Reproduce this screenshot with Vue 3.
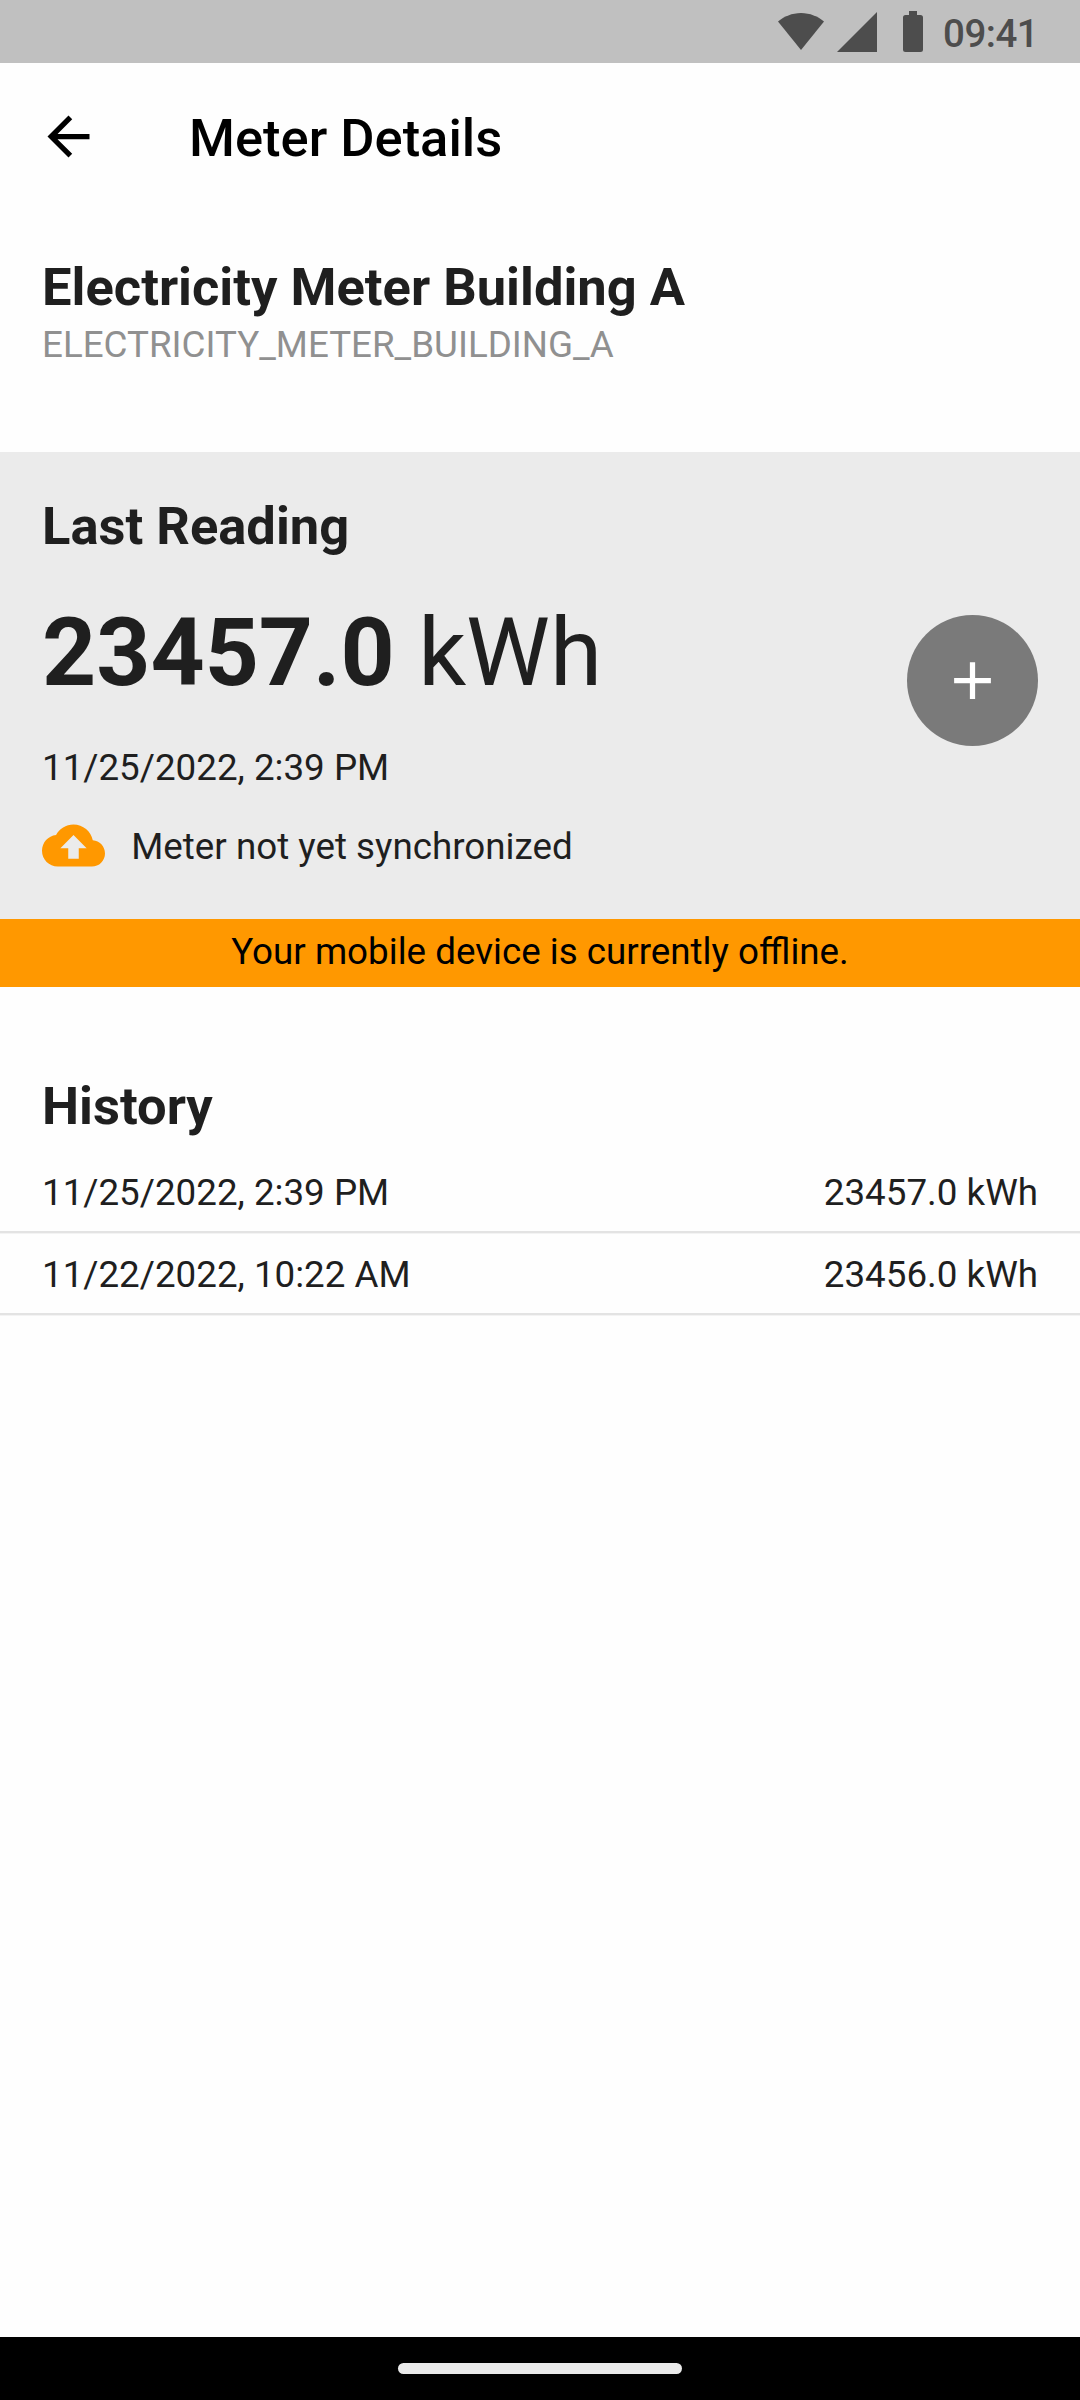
<script setup>
const meter = {
  name: 'Electricity Meter Building A',
  id: 'ELECTRICITY_METER_BUILDING_A',
  value: '23457.0',
  unit: 'kWh',
  date: '11/25/2022, 2:39 PM',
}
const history = [
  { date: '11/25/2022, 2:39 PM', value: '23457.0 kWh' },
  { date: '11/22/2022, 10:22 AM', value: '23456.0 kWh' },
]
</script>

<template>
  <div class="screen">
    <div class="status">
      <svg class="wifi" viewBox="0 0 46 37"><path d="M0 8.500C6 3.500 14 0 23 0s17 3.500 23 8.500L23 37z" /></svg>
      <svg class="signal" viewBox="0 0 40 40"><path d="M0 40L40 0v40z" /></svg>
      <svg class="battery" viewBox="0 0 20 41"><path d="M6 0h8v4h3.500A2.500 2.500 0 0 1 20 6.500v32a2.500 2.500 0 0 1-2.500 2.500h-15A2.500 2.500 0 0 1 0 38.500v-32A2.500 2.500 0 0 1 2.500 4H6z" /></svg>
      <span class="time">09:41</span>
    </div>

    <header class="appbar">
      <svg class="back" viewBox="0 0 24 24"><path d="M20 11H7.830l5.590-5.590L12 4l-8 8 8 8 1.410-1.410L7.830 13H20v-2z" /></svg>
      <h1 class="title">Meter Details</h1>
    </header>

    <section class="identity">
      <h2 class="heading name">{{ meter.name }}</h2>
      <p class="body id">{{ meter.id }}</p>
    </section>

    <section class="reading">
      <div class="info">
        <h2 class="heading last">Last Reading</h2>
        <p class="value"><b class="num">{{ meter.value }}</b> {{ meter.unit }}</p>
        <p class="body date">{{ meter.date }}</p>
        <div class="sync">
          <svg class="cloud" viewBox="0 0 24 24"><path d="M19.350 10.040C18.670 6.590 15.640 4 12 4 9.110 4 6.600 5.640 5.350 8.040 2.340 8.360 0 10.910 0 14c0 3.310 2.690 6 6 6h13c2.760 0 5-2.240 5-5 0-2.640-2.050-4.780-4.650-4.960zM14 13v4h-4v-4H7l5-5 5 5h-3z" /></svg>
          <span class="body sync-text">Meter not yet synchronized</span>
        </div>
      </div>
      <button class="add" aria-label="Add reading">
        <svg class="plus" viewBox="0 0 24 24"><path d="M19 13h-6v6h-2v-6H5v-2h6V5h2v6h6v2z" /></svg>
      </button>
    </section>

    <div class="banner">Your mobile device is currently offline.</div>

    <section class="history">
      <h2 class="heading history-title">History</h2>
      <div v-for="row in history" :key="row.date" class="row">
        <span class="body">{{ row.date }}</span>
        <span class="body">{{ row.value }}</span>
      </div>
    </section>

    <div class="nav"><div class="pill"></div></div>
  </div>
</template>

<style>
body {
  margin: 0;
}
</style>

<style scoped>
.screen {
  width: 1080px;
  height: 2400px;
  display: flex;
  flex-direction: column;
  background: #fefefe;
  color: #1f1f1f;
  font-family: Roboto, sans-serif;
  overflow: hidden;
}
h1, h2, p {
  margin: 0;
}
.status {
  flex: none;
  height: 63px;
  box-sizing: border-box;
  padding-right: 42px;
  display: flex;
  justify-content: flex-end;
  align-items: flex-start;
  background: #c0c0c0;
  color: #4d4d4d;
  fill: #4d4d4d;
}
.wifi {
  width: 46px;
  height: 37px;
  margin-top: 13px;
}
.signal {
  width: 40px;
  height: 40px;
  margin: 12px 0 0 13px;
}
.battery {
  width: 20px;
  height: 41px;
  margin: 11px 20px 0 26px;
}
.time {
  width: 95px;
  margin-top: 12px;
  font-size: 38.5px;
  line-height: 44px;
  font-weight: 500;
  letter-spacing: -0.5px;
}
.appbar {
  flex: none;
  height: 147px;
  display: flex;
  align-items: center;
  padding-left: 36.75px;
  color: #000;
}
.back {
  width: 63px;
  height: 63px;
}
.title {
  margin: 3px 0 0 89.25px;
  font-size: 52.5px;
  line-height: 62px;
  font-weight: 500;
}
.identity {
  flex: none;
  height: 242px;
  box-sizing: border-box;
  padding: 46px 42px 0;
}
.heading {
  font-size: 52.5px;
  line-height: 62px;
  font-weight: 700;
}
.body {
  font-size: 36.75px;
  line-height: 43px;
}
.id {
  margin-top: 5px;
  color: #909090;
}
.reading {
  flex: none;
  height: 467px;
  box-sizing: border-box;
  padding: 43px 42px 0;
  display: flex;
  justify-content: space-between;
  background: #ebebeb;
}
.value {
  margin-top: 41px;
  font-size: 94.5px;
  line-height: 110px;
}
.num {
  font-weight: 700;
}
.date {
  margin-top: 38px;
}
.sync {
  margin-top: 25px;
  display: flex;
  align-items: center;
}
.cloud {
  width: 63px;
  height: 63px;
  fill: #ff9800;
}
.sync-text {
  margin: 2px 0 0 26.25px;
}
.add {
  width: 131.25px;
  height: 131.25px;
  margin: 120px 0 0;
  padding: 0;
  border: 0;
  border-radius: 50%;
  background: #7a7a7a;
  display: flex;
  align-items: center;
  justify-content: center;
}
.plus {
  width: 63px;
  height: 63px;
  fill: #fff;
}
.banner {
  flex: none;
  height: 68px;
  background: #ff9800;
  color: #000;
  text-align: center;
  font-size: 36.75px;
  line-height: 65px;
}
.history {
  flex: 1;
  padding-top: 88px;
}
.history-title {
  padding-left: 42px;
  margin-bottom: 14px;
}
.row {
  height: 82px;
  box-sizing: border-box;
  padding: 20px 42px 0;
  display: flex;
  justify-content: space-between;
  border-bottom: 2px solid #e3e3e3;
  box-shadow: 0 1px 0 #f3f3f3;
}
.nav {
  flex: none;
  height: 63px;
  display: flex;
  align-items: center;
  justify-content: center;
  background: #000;
}
.pill {
  width: 284px;
  height: 11px;
  border-radius: 6px;
  background: #eaeaea;
}
</style>
